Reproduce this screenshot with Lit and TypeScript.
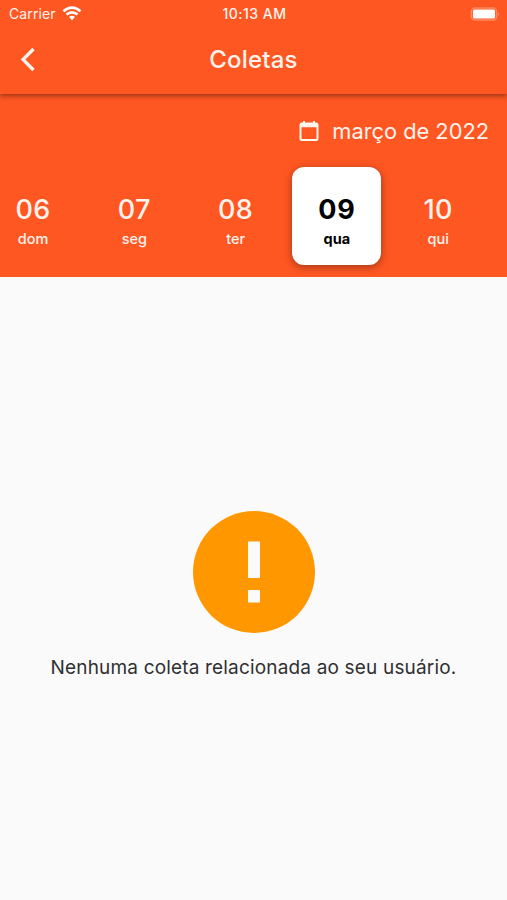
import { LitElement, html, css } from "lit";
import { customElement, property } from "lit/decorators.js";

@customElement("day-tile")
class DayTile extends LitElement {
  @property() num = "";
  @property() label = "";
  static styles = css`
    :host { display: flex; flex-direction: column; align-items: center; box-sizing: border-box; width: 89px; height: 98px; padding-top: 25px; border-radius: 12px; color: #fff3ee; flex: none; }
    :host([selected]) { background: #fff; color: #000; box-shadow: 0 2px 8px rgba(0,0,0,.38); }
    .num { font-size: 27px; line-height: 36px; font-weight: 500; letter-spacing: .3px; }
    .label { font-size: 14.5px; line-height: 20px; font-weight: 450; margin-top: 1px; }
    :host([selected]) .num { font-weight: 650; letter-spacing: .8px; }
    :host([selected]) .label { font-weight: 650; }
  `;
  render() {
    return html`<div class="num">${this.num}</div><div class="label">${this.label}</div>`;
  }
}

@customElement("app-root")
class AppRoot extends LitElement {
  days = [["06", "dom"], ["07", "seg"], ["08", "ter"], ["09", "qua"], ["10", "qui"]];
  static styles = css`
    :host { display: flex; flex-direction: column; height: 900px; overflow: hidden; background: #fafafa; font-family: Inter, sans-serif; color: #fff3ee; }
    .top { height: 94px; background: #ff5722; box-shadow: 0 2px 5px rgba(0,0,0,.4); z-index: 1; flex: none; }
    .status { height: 28px; display: grid; grid-template-columns: 1fr auto 1fr; align-items: center; padding: 0 7px 1px 9px; font-size: 14px; line-height: 16px; box-sizing: border-box; }
    .carrier { display: flex; align-items: center; gap: 6px; letter-spacing: .1px; }
    .carrier svg { display: block; }
    .time { font-weight: 550; letter-spacing: .5px; }
    .battery { justify-self: end; display: block; }
    .bar { height: 64px; display: grid; grid-template-columns: 56px 1fr 56px; align-items: center; text-align: center; }
    .bar svg { margin-left: 17px; display: block; }
    .title { font-size: 24px; line-height: 28px; font-weight: 540; letter-spacing: .2px; }
    .picker { height: 183px; background: #ff5722; flex: none; }
    .month { height: 73px; display: flex; align-items: center; justify-content: flex-end; gap: 12px; padding-right: 18px; font-size: 21.8px; }
    .days { display: flex; gap: 12.3px; margin-left: -11.5px; }
    .empty { flex: 1; display: flex; flex-direction: column; align-items: center; padding-top: 234px; }
    .message { margin-top: 21px; font-size: 19px; line-height: 28px; letter-spacing: .17px; color: #303030; white-space: nowrap; }
  `;
  render() {
    return html`
      <div class="top">
        <div class="status">
          <div class="carrier"><span>Carrier</span>
            <svg width="20" height="15" viewBox="0 0 20 15" fill="none" stroke="#fff" stroke-width="2.6"><path d="M1.500 5.200Q10-1.900 18.500 5.200M4.500 8.500Q10 4.100 15.500 8.500"/><path d="M7 11Q10 8.600 13 11L10 14.200Z" fill="#fff" stroke="none"/></svg>
          </div>
          <div class="time">10:13 AM</div>
          <svg class="battery" width="30" height="14" viewBox="0 0 30 14"><rect x="1.500" y="1" width="25" height="12" rx="3.500" fill="none" stroke="#ff8a63" stroke-width="1.500"/><rect x="3" y="2.500" width="22" height="9" rx="1.500" fill="#fff"/><path d="M28 5q2 2 0 4z" fill="#ff8a63"/></svg>
        </div>
        <div class="bar">
          <svg width="22" height="26" viewBox="0 0 22 26" fill="none" stroke="#fff3ee" stroke-width="3.3"><path d="M16.500 2L6 12.500L16.500 23"/></svg>
          <div class="title">Coletas</div>
        </div>
      </div>
      <div class="picker">
        <div class="month">
          <svg width="22" height="22" viewBox="0 0 22 22" fill="none" stroke="#fff3ee" stroke-width="2"><rect x="2.500" y="3.500" width="17" height="16.500" rx="1.200"/><path d="M2 5.500H20" stroke-width="3.500"/><path d="M6 1V4M16 1V4"/></svg>
          <span>março de 2022</span>
        </div>
        <div class="days">${this.days.map(([n, l]) => html`<day-tile .num=${n} .label=${l} ?selected=${n === "09"}></day-tile>`)}</div>
      </div>
      <div class="empty">
        <svg width="122" height="122" viewBox="0 0 122 122"><circle cx="61" cy="61" r="61" fill="#ff9800"/><path d="M55 30.500H67V67H55ZM55 79H67V91.500H55Z" fill="#fafafa"/></svg>
        <div class="message">Nenhuma coleta relacionada ao seu usuário.</div>
      </div>`;
  }
}
